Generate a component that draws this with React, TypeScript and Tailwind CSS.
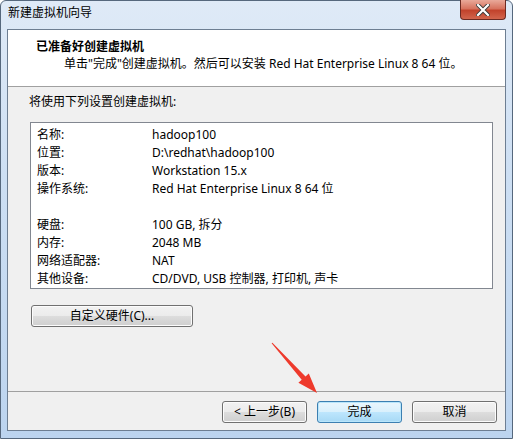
import React from "react";

const font = { fontFamily: '"Segoe UI", "Noto Sans", "Noto Sans CJK SC", sans-serif' };

const rows: [string, string][] = [
  ["名称:", "hadoop100"],
  ["位置:", "D:\\redhat\\hadoop100"],
  ["版本:", "Workstation 15.x"],
  ["操作系统:", "Red Hat Enterprise Linux 8 64 位"],
  ["", ""],
  ["硬盘:", "100 GB, 拆分"],
  ["内存:", "2048 MB"],
  ["网络适配器:", "NAT"],
  ["其他设备:", "CD/DVD, USB 控制器, 打印机, 声卡"],
];

function Btn({ children, primary, w }: { children: React.ReactNode; primary?: boolean; w: string }) {
  return (
    <div
      className={
        "h-[22px] flex items-center justify-center rounded-[3px] border text-[12px] text-black " +
        w +
        (primary
          ? " border-[#3c7fb1] bg-[linear-gradient(#eaf6fd_0%,#d9f0fc_50%,#bee6fd_50%,#a7d9f5_100%)] shadow-[inset_0_0_0_1px_#b9e6fb]"
          : " border-[#707070] bg-[linear-gradient(#f2f2f2_0%,#ebebeb_50%,#dddddd_50%,#cfcfcf_100%)] shadow-[inset_0_0_0_1px_#fcfcfc]")
      }
    >
      {children}
    </div>
  );
}

export default function App() {
  return (
    <div className="relative w-[513px] h-[439px] bg-white" style={font}>
      <div className="w-[513px] h-[439px] flex flex-col rounded-t-[6px] border border-[#56687d] bg-[linear-gradient(180deg,#dfeaf7_0%,#cddff3_40%,#bcd4ef_100%)]">
        <div className="h-[28px] flex items-start justify-between pl-[7px] pr-[6px]">
          <div className="pt-[4px] text-[12px] text-black leading-[16px]">新建虚拟机向导</div>
          <div className="w-[46px] h-[20px] -mt-[1px] rounded-b-[4px] border border-[#6b2a22] border-t-0 bg-[linear-gradient(180deg,#e9a99a_0%,#d7735f_45%,#c2432c_55%,#d2654d_100%)] flex items-center justify-center">
            <svg width="14" height="12" viewBox="0 0 14 12">
              <path d="M2 1 L12 11 M12 1 L2 11" stroke="#3a3a3a" strokeWidth="4" strokeLinecap="square" />
              <path d="M2 1 L12 11 M12 1 L2 11" stroke="#ffffff" strokeWidth="2.2" strokeLinecap="square" />
            </svg>
          </div>
        </div>
        <div className="flex-1 mx-[6px] mb-[7px] border border-[#6d7e92] bg-[#f0f0f0] flex flex-col">
          <div className="h-[57px] shrink-0 bg-white border-b border-[#a0a0a0] pl-[28px] pt-[8px]">
            <div className="text-[12px] font-bold leading-[17px] text-black">已准备好创建虚拟机</div>
            <div className="pl-[28px] text-[12px] leading-[17px] text-black">
              单击"完成"创建虚拟机。然后可以安装 Red Hat Enterprise Linux 8 64 位。
            </div>
          </div>
          <div className="pl-[21px] pt-[7px] text-[12px] leading-[16px] text-black">将使用下列设置创建虚拟机:</div>
          <div className="ml-[22px] mt-[12px] w-[463px] h-[167px] bg-white border border-[#828790] pl-[6px] pt-[3px]">
            {rows.map(([k, v], i) => (
              <div key={i} className="flex h-[18px] items-center text-[12px] text-black">
                <div className="w-[115px]">{k}</div>
                <div>{v}</div>
              </div>
            ))}
          </div>
          <div className="ml-[23px] mt-[16px]">
            <Btn w="w-[162px]">自定义硬件(C)...</Btn>
          </div>
          <div className="flex-1" />
          <div className="border-t border-[#a0a0a0] h-[1px]" />
          <div className="h-[38px] flex justify-end items-start gap-[10px] pr-[8px] pt-[9px]">
            <Btn w="w-[85px]">&lt; 上一步(B)</Btn>
            <Btn w="w-[85px]" primary>完成</Btn>
            <Btn w="w-[85px]">取消</Btn>
          </div>
        </div>
      </div>
      <svg className="absolute left-0 top-0 pointer-events-none" width="513" height="439" viewBox="0 0 513 439">
        <polygon
          points="271.6,343.3 301.7,379.8 298.4,382.8 317,393 308.8,373.4 305.5,376.4 272.4,342.7"
          fill="#ee3a2c"
        />
      </svg>
    </div>
  );
}
